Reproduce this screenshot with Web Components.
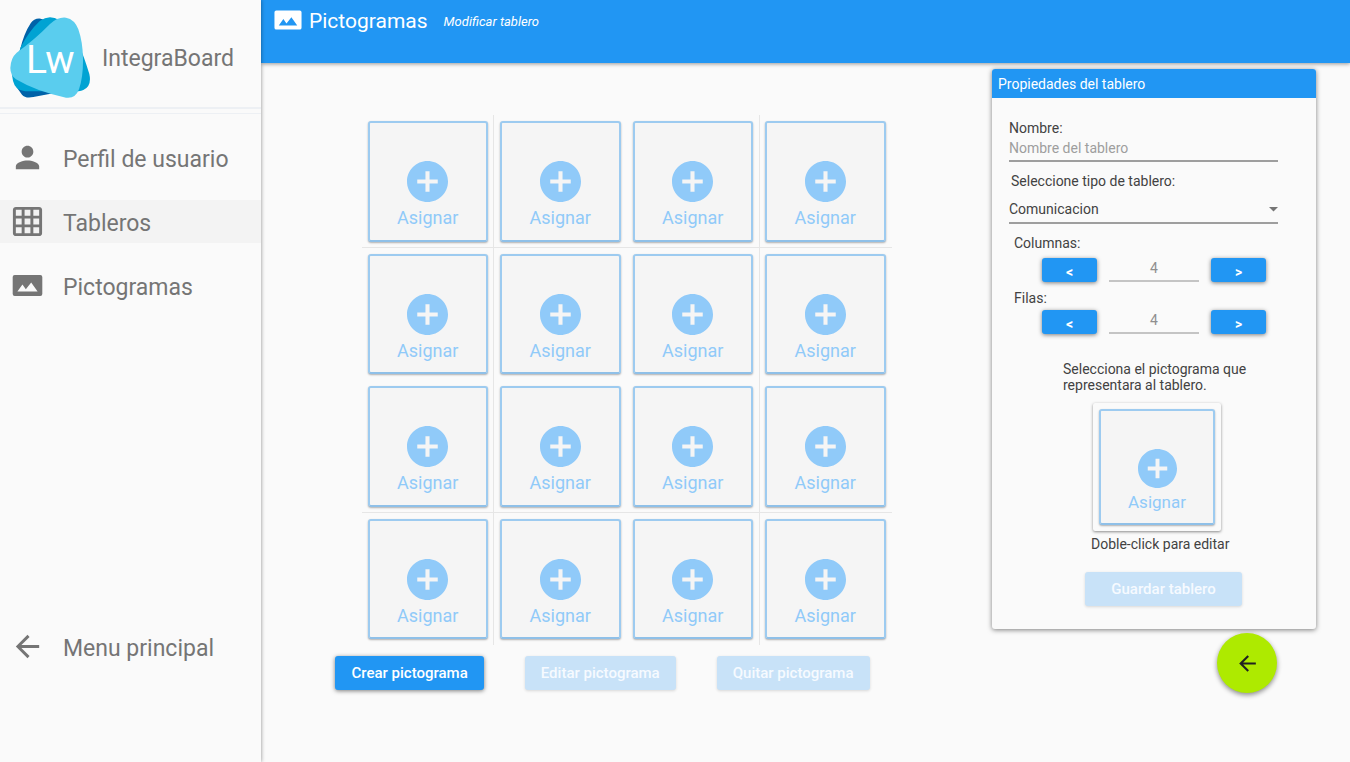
<!DOCTYPE html>
<html lang="es">
<head>
<meta charset="utf-8">
<meta name="viewport" content="width=device-width, initial-scale=1">
<title>IntegraBoard</title>
<style>
  body { margin: 0; background: #fafafa; color: #424242; font: 14px/16px Roboto, "Liberation Sans", sans-serif; }
</style>
</head>
<body>
<integra-app></integra-app>
<script>
const ICONS = {
  person: '<svg viewBox="0 0 24 24"><path d="M12 12c2.200 0 4-1.800 4-4s-1.800-4-4-4-4 1.800-4 4 1.800 4 4 4zm0 2c-2.700 0-8 1.300-8 4v2h16v-2c0-2.700-5.300-4-8-4z"/></svg>',
  grid: '<svg viewBox="0 0 24 24"><path d="M20 2H4c-1.100 0-2 .9-2 2v16c0 1.100.9 2 2 2h16c1.100 0 2-.9 2-2V4c0-1.100-.9-2-2-2zM8 20H4v-4h4v4zm0-6H4v-4h4v4zm0-6H4V4h4v4zm6 12h-4v-4h4v4zm0-6h-4v-4h4v4zm0-6h-4V4h4v4zm6 12h-4v-4h4v4zm0-6h-4v-4h4v4zm0-6h-4V4h4v4z"/></svg>',
  image: '<svg viewBox="-8 -21 104 104"><path fill-rule="evenodd" d="M6 0H82Q88 0 88 6V56Q88 62 82 62H6Q0 62 0 56V6Q0 0 6 0ZM14 49H74L55 22L39 42L29 28Z"/></svg>',
  back: '<svg viewBox="0 0 24 24"><path d="M20 11H7.830l5.590-5.590L12 4l-8 8 8 8 1.410-1.410L7.830 13H20v-2z"/></svg>',
  add: '<svg viewBox="2 2 20 20"><path d="M12 2C6.480 2 2 6.480 2 12s4.480 10 10 10 10-4.480 10-10S17.520 2 12 2zm5 11h-4v4h-2v-4H7v-2h4V7h2v4h4v2z"/></svg>'
};

function define(name, html, setup) {
  const template = document.createElement('template');
  template.innerHTML = '<style>*{box-sizing:border-box}svg{display:block;fill:currentColor}button,input,select{font:inherit}</style>' + html;
  customElements.define(name, class extends HTMLElement {
    constructor() {
      super();
      this.attachShadow({ mode: 'open' }).append(template.content.cloneNode(true));
    }
    connectedCallback() { if (setup) setup(this.shadowRoot, this); }
  });
}

define('ui-icon', `
  <style>:host{display:block;flex:none;width:var(--icon-size,24px)} svg{width:100%}</style>
  <span></span>`,
  (root, el) => { root.querySelector('span').innerHTML = ICONS[el.getAttribute('name')] || ''; });

define('app-logo', `
  <style>
    :host{display:block;flex:none;width:80px}
    svg{width:100%} text{font:39px Roboto,"Liberation Sans",sans-serif;fill:#fff}
  </style>
  <svg viewBox="10 17 80 81" role="img" aria-label="Lw">
    <g transform="scale(.33333)">
      <path fill="#0062a8" d="M60 150Q72 100 92 70Q102 54 122 56L170 72L180 276L100 291Q76 296 66 284L50 262Z"/>
      <path fill="#00a3d3" d="M36 225L62 142Q85 95 120 62Q148 42 178 60L235 130Q252 170 268 222Q276 258 250 270Q235 276 200 274L76 274Q54 272 44 256Q38 244 36 225Z"/>
      <path fill="#5acdee" d="M50 158Q105 118 150 72Q174 50 198 53Q224 58 235 88Q248 125 249 175Q250 230 237 268Q226 297 198 293Q110 275 48 238Q31 226 31 204Q32 174 50 158Z"/>
    </g>
    <text x="26" y="73">Lw</text>
  </svg>`);

define('nav-item', `
  <style>
    :host{display:block}
    a{display:flex;align-items:center;gap:18px;height:43px;padding:0 10px;color:#757575;text-decoration:none;font-size:23px;line-height:28px;--icon-size:35px;white-space:nowrap}
    :host([active]) a{background:#f3f3f3}
    span{padding-top:4px}
  </style>
  <a href="#"><span><slot></slot></span></a>`,
  (root, el) => {
    const icon = document.createElement('ui-icon');
    icon.setAttribute('name', el.getAttribute('icon'));
    root.querySelector('a').prepend(icon);
  });

define('side-bar', `
  <style>
    :host{display:flex;flex-direction:column;flex:none;width:261px;padding-bottom:94px;position:relative;z-index:2;background:#fafafa;box-shadow:0 0 4px rgba(0,0,0,.45)}
    header{display:flex;align-items:center;gap:12px;padding:17px 10px 9px;border-bottom:2px solid #edf0f4;color:#757575;font-size:23px;line-height:28px}
    header span{padding-top:3px}
    nav{display:flex;flex-direction:column;flex:1;gap:21px;margin-top:4px;padding-top:22px;border-top:1px solid #edf0f4}
    .last{margin-top:auto}
  </style>
  <header><app-logo></app-logo><span>IntegraBoard</span></header>
  <nav>
    <nav-item icon="person">Perfil de usuario</nav-item>
    <nav-item icon="grid" active>Tableros</nav-item>
    <nav-item icon="image">Pictogramas</nav-item>
    <nav-item icon="back" class="last">Menu principal</nav-item>
  </nav>`);

define('top-bar', `
  <style>
    :host{display:flex;align-items:flex-start;height:63px;padding:4px 11px;background:#2196f3;color:#fff;box-shadow:0 1px 4px rgba(0,0,0,.4);--icon-size:32px}
    h1{margin:3px 16px 0 5px;font-size:21px;line-height:28px;font-weight:400}
    em{margin-top:10px;font-size:13px}
  </style>
  <ui-icon name="image"></ui-icon><h1>Pictogramas</h1><em>Modificar tablero</em>`);

define('picto-tile', `
  <style>
    :host{display:block;font-size:18px}
    button{display:flex;flex-direction:column;align-items:center;gap:var(--tile-gap,5px);width:100%;height:100%;padding:38px 0 0;border:2px solid #9dcbf0;border-bottom-color:#8fc0e8;border-radius:3px;background:#f5f5f5;color:#90caf9;line-height:22px;box-shadow:0 1px 2px rgba(0,0,0,.3)}
    ui-icon{--icon-size:var(--tile-icon,41px)}
  </style>
  <button type="button"><ui-icon name="add"></ui-icon><slot>Asignar</slot></button>`);

define('picto-board', `
  <style>
    :host{display:grid;grid-template-columns:repeat(4,1fr);grid-template-rows:repeat(4,1fr);width:100%;max-width:530px;aspect-ratio:1}
    div{padding:6px;border:0 solid #e6e6e6}
    div:nth-of-type(4n+1){border-right-width:1px;padding-right:5px}
    div:nth-of-type(4n+4){border-left-width:1px;padding-left:5px}
    .line{border-bottom-width:1px;padding-bottom:5px}
    picto-tile{height:100%}
  </style>`,
  root => {
    root.append(...Array.from({ length: 16 }, (_, i) => {
      const cell = document.createElement('div');
      if (i < 4 || (i > 7 && i < 12)) cell.className = 'line';
      cell.append(document.createElement('picto-tile'));
      return cell;
    }));
  });

define('raised-button', `
  <style>
    :host{display:block}
    button{display:block;width:100%;height:34px;padding:0 16px;border:0;border-radius:3px;background:#2196f3;color:#fff;font-size:15px;line-height:18px;font-weight:500;white-space:nowrap;box-shadow:0 1px 4px rgba(0,0,0,.5)}
    button:disabled{background:#c8e2f8;color:#f6faff;box-shadow:0 1px 3px rgba(0,0,0,.14)}
    :host([small]) button{height:24px;padding:4px 0 0;font-size:14px;line-height:16px;font-weight:700}
  </style>
  <button type="button"><slot></slot></button>`,
  (root, el) => { root.querySelector('button').disabled = el.hasAttribute('disabled'); });

define('number-stepper', `
  <style>
    :host{display:block}
    label{display:block;padding-left:5px}
    div{display:grid;grid-template-columns:55px 1fr 55px;gap:12px;margin:var(--label-gap,7px) 12px 0 33px}
    input{width:100%;min-width:0;height:24px;padding:0 0 2px;border:0;border-bottom:2px solid #c4c4c4;border-radius:0;background:none;color:#8f8f8f;text-align:center}
  </style>
  <label for="n"></label>
  <div><raised-button small>&lt;</raised-button><input id="n" type="text" value="4"><raised-button small>&gt;</raised-button></div>`,
  (root, el) => { root.querySelector('label').textContent = el.getAttribute('label'); });

define('board-properties', `
  <style>
    :host{display:block;border-radius:3px;background:#fafafa;box-shadow:0 1px 5px rgba(0,0,0,.5);overflow:hidden}
    h2{margin:0;padding:7px 6px 6px;background:#2196f3;color:#fff;font-size:14px;line-height:16px;font-weight:400}
    form{padding:22px 38px 23px 17px}
    label{display:block}
    input,select{display:block;width:100%;border:0;border-bottom:2px solid #9e9e9e;border-radius:0;background:none;color:#424242;padding:0}
    input{height:26px}
    input::placeholder{color:#9e9e9e;opacity:1}
    select{height:30px;padding-top:2px;appearance:none}
    .type{margin:11px 0 5px;padding-left:2px}
    .select{position:relative}
    .select svg{position:absolute;right:0;top:13px;width:9px;color:#757575}
    .columns{margin-top:11px}
    .rows{margin-top:8px;--label-gap:4px}
    p{margin:0}
    .hint{margin:27px 0 10px 54px}
    .preview{width:128px;height:128px;margin-left:84px;padding:6px;border-radius:2px;background:#fafafa;box-shadow:0 1px 3px rgba(0,0,0,.45);--tile-icon:39px;--tile-gap:3px}
    .preview picto-tile{height:100%;font-size:17px}
    .edit{margin:5px 0 20px 82px}
    .save{width:157px;margin-left:76px}
  </style>
  <h2>Propiedades del tablero</h2>
  <form>
    <label for="name">Nombre:</label>
    <input id="name" type="text" placeholder="Nombre del tablero">
    <label class="type" for="type">Seleccione tipo de tablero:</label>
    <div class="select">
      <select id="type"><option>Comunicacion</option></select>
      <svg viewBox="0 0 10 5"><path d="M0 0H10L5 5Z"/></svg>
    </div>
    <number-stepper class="columns" label="Columnas:"></number-stepper>
    <number-stepper class="rows" label="Filas:"></number-stepper>
    <p class="hint">Selecciona el pictograma que<br>representara al tablero.</p>
    <div class="preview"><picto-tile></picto-tile></div>
    <p class="edit">Doble-click para editar</p>
    <raised-button class="save" disabled>Guardar tablero</raised-button>
  </form>`);

define('back-fab', `
  <style>
    :host{display:block}
    button{display:grid;place-items:center;width:60px;height:60px;padding:0;border:0;border-radius:50%;background:#aeea00;color:#212121;box-shadow:0 2px 5px rgba(0,0,0,.45);--icon-size:25px}
  </style>
  <button type="button" aria-label="Volver"><ui-icon name="back"></ui-icon></button>`);

define('integra-app', `
  <style>
    :host{display:flex;min-height:100vh}
    .page{flex:1;min-width:0}
    main{display:flex;align-items:flex-start;padding-right:34px}
    section{flex:1;min-width:0;display:flex;flex-direction:column;align-items:center;padding-top:52px}
    .actions{display:flex;gap:41px;margin-top:11px;padding-right:48px}
    aside{width:324px;flex:none;padding-top:6px}
    back-fab{width:60px;margin:4px 39px 0 auto}
  </style>
  <side-bar></side-bar>
  <div class="page">
    <top-bar></top-bar>
    <main>
      <section>
        <picto-board></picto-board>
        <div class="actions">
          <raised-button>Crear pictograma</raised-button>
          <raised-button disabled>Editar pictograma</raised-button>
          <raised-button disabled>Quitar pictograma</raised-button>
        </div>
      </section>
      <aside><board-properties></board-properties><back-fab></back-fab></aside>
    </main>
  </div>`);
</script>
</body>
</html>
